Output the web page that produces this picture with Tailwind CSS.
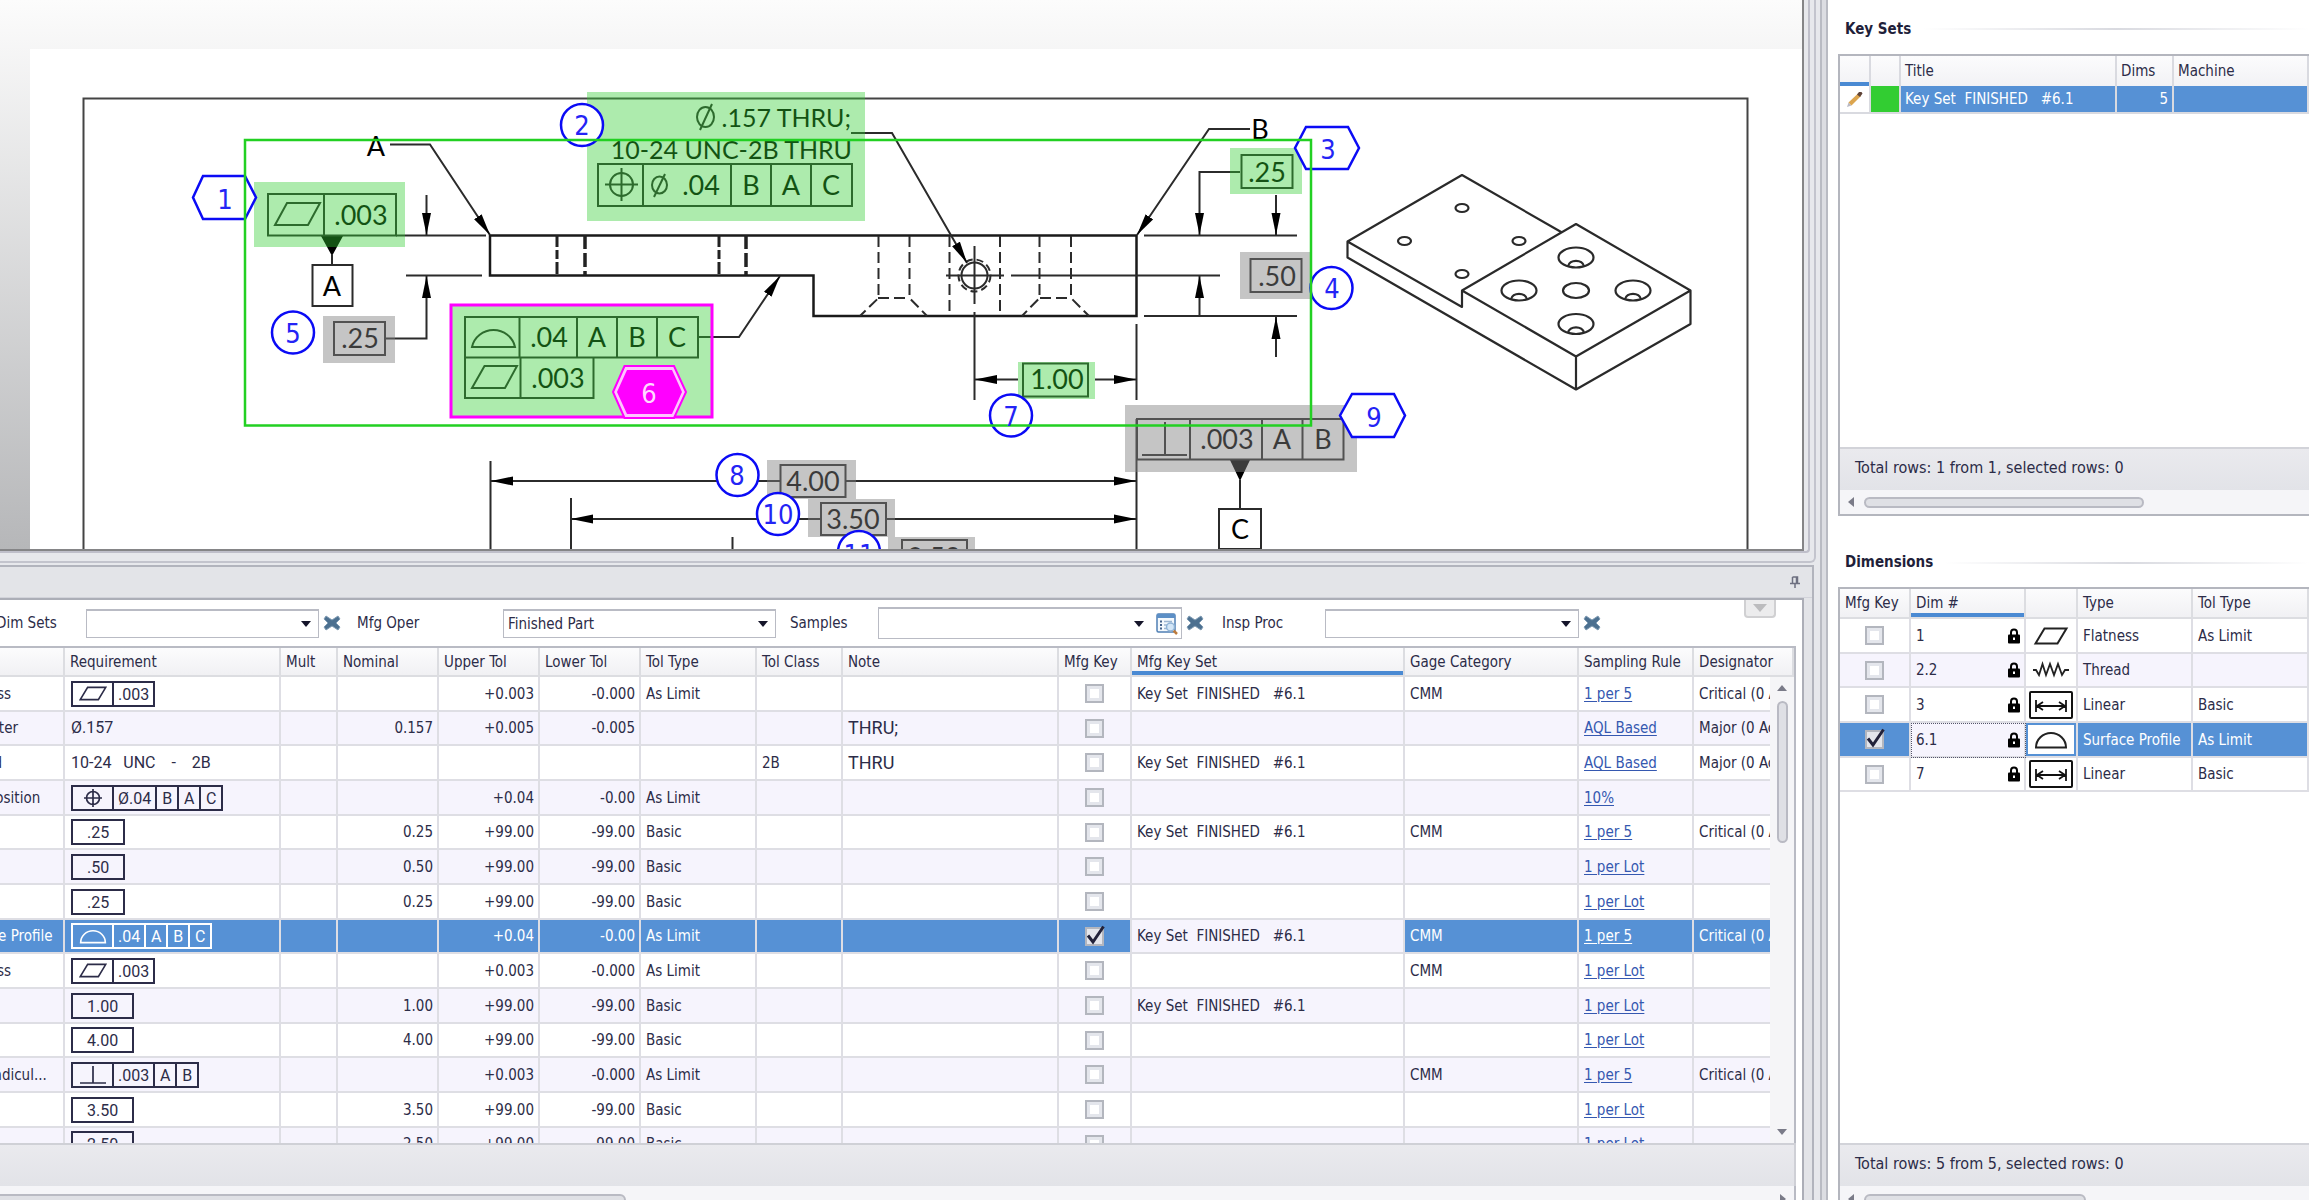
<!DOCTYPE html>
<html lang="en">
<head>
    <meta charset="UTF-8">
    <meta name="viewport" content="width=device-width, initial-scale=1.0">
    <title>Inspection Plan - Key Sets</title>
    <script src="https://cdn.jsdelivr.net/npm/@tailwindcss/browser@4"></script>
</head>
<body class="flex h-screen overflow-hidden bg-[#e7e8ec] font-['DejaVu_Sans_Condensed','DejaVu_Sans',sans-serif] text-[15px] leading-5 text-[#2c2c48]">

    <!-- Shared symbols -->
    <svg class="hidden" aria-hidden="true">
        <defs>
            <symbol id="clear" viewBox="0 0 18 16">
                <path d="M3 1L9 5L15 1L17 4L13 8L17 12L15 15L9 11L3 15L1 12L5 8L1 4Z" fill="#4c7090" stroke="#7f9bb3" stroke-width="1" stroke-linejoin="round"/>
            </symbol>
            <symbol id="flatness" viewBox="0 0 34 18">
                <path d="M1.5 16.5L10.5 1.5H32.5L23.5 16.5Z" fill="none" stroke="currentColor" stroke-width="2"/>
            </symbol>
            <symbol id="profile" viewBox="0 0 34 18">
                <path d="M2 16.500A15 14.500 0 0 1 32 16.500Z" fill="none" stroke="currentColor" stroke-width="2"/>
            </symbol>
            <symbol id="position" viewBox="0 0 34 18">
                <path d="M8 9H26M17 0V18M10.500 9a6.500 6.500 0 1 0 13 0a6.500 6.500 0 1 0 -13 0" fill="none" stroke="currentColor" stroke-width="1.700"/>
            </symbol>
            <symbol id="perpendicular" viewBox="0 0 34 18">
                <path d="M4 17H30M17 0V17" fill="none" stroke="currentColor" stroke-width="1.700"/>
            </symbol>
            <symbol id="thread" viewBox="0 0 38 18">
                <path d="M1 9H4L7 14L10.500 3L14 14L18 3L22 14L26 3L30 14L33 9H37" fill="none" stroke="#222" stroke-width="1.800"/>
            </symbol>
            <symbol id="linear" viewBox="0 0 44 28">
                <rect x="1" y="1" width="42" height="26" rx="1" fill="#fff" stroke="#111" stroke-width="2"/>
                <path d="M7 9V21M37 9V21M8 15H36M14 11L8 15L14 19M30 11L36 15L30 19" fill="none" stroke="#111" stroke-width="1.800"/>
            </symbol>
            <symbol id="lock" viewBox="0 0 12 16">
                <path d="M3 7V4.500a3 3 0 0 1 6 0V7" fill="none" stroke="#000" stroke-width="2"/>
                <rect x="0" y="6.500" width="12" height="9" rx="1" fill="#000"/>
                <path d="M6 9.500V12" stroke="#fff" stroke-width="2"/>
            </symbol>
        </defs>
    </svg>

    <!-- Drawing and characteristics -->
    <main class="flex min-w-0 flex-1 flex-col">
        <div class="mr-1 h-[563px] shrink-0 rounded-br-md border-r-2 border-b-2 border-[#c3c4cd]">
            <div class="mr-1 h-[553px] rounded-br border-r-2 border-b-2 border-[#bfbfca] pr-1">
                <section class="h-[551px] overflow-hidden border-r-2 border-b-2 border-[#858587] bg-linear-to-b from-[#fcfcfc] to-[#b6b7b9]" aria-label="Part drawing">
                    <svg viewBox="0 0 1802 549" preserveAspectRatio="xMinYMin slice" class="block h-full w-full font-[Lato,sans-serif] text-[27px]" fill="none" stroke="#2b2b2b" stroke-width="2">
                        <defs>
                            <marker id="arrow" markerUnits="userSpaceOnUse" markerWidth="23" markerHeight="10" refX="22" refY="5" orient="auto-start-reverse">
                                <path d="M0 0.500L22 5L0 9.500Z" fill="#000" stroke="none"/>
                            </marker>
                        </defs>
                        <rect x="30" y="49" width="1780" height="510" fill="#fff" stroke="none"/>
                        <path d="M83.500 560V98.500H1747.500V560" stroke="#444"/>

                        <!-- Side view -->
                        <path d="M490 235.500H1136.500V316H813.500V275.500H490Z" stroke="#1a1a1a" stroke-width="2.500"/>
                        <path d="M557 235V275M719 235V275" stroke="#222" stroke-width="3" stroke-dasharray="12 3 9 3"/>
                        <path d="M585 235V275M746 235V275" stroke="#222" stroke-width="3.500" stroke-dasharray="14 4"/>
                        <g stroke-dasharray="11 5">
                            <path d="M878.500 236V298L860 316M909.500 236V298L927 316M878 298H910"/>
                            <path d="M949.500 236V316M1000 236V316"/>
                            <path d="M1039.500 236V298L1022 316M1071 236V298L1089 316M1040 298H1071"/>
                        </g>
                        <circle cx="974.500" cy="275.500" r="13"/>
                        <circle cx="974.500" cy="275.500" r="16" stroke-dasharray="7 4"/>
                        <path d="M974.500 246V304M974.500 312V400M946 275.500H1004M1011 275.500H1220"/>
                        <path d="M396 235.500H486M406 275.500H482M1144 235.500H1297M1144 316H1297M1136.500 324V400M1136.500 419V560M490.500 461V560M571 498V560M732.500 537V560"/>

                        <!-- Leaders -->
                        <g marker-end="url(#arrow)">
                            <path d="M390 144.500H430L490 235"/>
                            <path d="M851 133H892L967 263"/>
                            <path d="M1250 129H1209L1137 235"/>
                            <path d="M698 337H739L780 276"/>
                            <path d="M426.500 195V235"/>
                            <path d="M386 338.500H426.500V276"/>
                            <path d="M1240 172H1199.500V235"/>
                            <path d="M1276 195V235"/>
                            <path d="M1199.500 316V276"/>
                            <path d="M1276 357V317"/>
                            <path d="M1018 379.500H975"/>
                            <path d="M1095 379.500H1136"/>
                        </g>
                        <path d="M491 481H1136" marker-start="url(#arrow)" marker-end="url(#arrow)"/>
                        <path d="M571 519H1136" marker-start="url(#arrow)" marker-end="url(#arrow)"/>

                        <!-- Datums -->
                        <path d="M321 236H343L332 256ZM1230 460H1250L1240 481Z" fill="#000" stroke="none"/>
                        <path d="M332 255V265M1240 480V509"/>
                        <rect x="312.500" y="265" width="40" height="41"/>
                        <rect x="1219" y="509" width="42" height="40"/>

                        <!-- Feature control frames -->
                        <path d="M268 194H396V235.500H268ZM324 194V235M275 225L287 203H320L308 225Z"/>
                        <path d="M598 164H852V206H598ZM643 164V206M731 164V206M771 164V206M811 164V206M605 184.500H638M621.500 168V201"/>
                        <circle cx="621.500" cy="184.500" r="11.500"/>
                        <ellipse cx="705.500" cy="117" rx="8.500" ry="10"/>
                        <path d="M700 130L712 104"/>
                        <ellipse cx="659.500" cy="185" rx="7.500" ry="8.500"/>
                        <path d="M654 197L665 174"/>
                        <path d="M465 317H698V357.500H465ZM519.500 317V357M577 317V357M617 317V357M657 317V357M465 357.500H593.500V398H465ZM520.500 357V398"/>
                        <path d="M472 347A22 21.500 0 0 1 515 347ZM472 388L484.500 366H517L505 388Z"/>
                        <path d="M1137 419H1343.500V459.500H1137ZM1190 419V459M1262 419V459M1302.500 419V459M1165 422V455M1142 455H1187"/>
                        <g fill="#fff">
                            <rect x="334" y="322" width="51" height="33"/>
                            <rect x="1241.500" y="155" width="51" height="33"/>
                            <rect x="1250.500" y="259" width="51" height="33"/>
                            <rect x="1023" y="363.500" width="65" height="33"/>
                            <rect x="780.500" y="465" width="65" height="32"/>
                            <rect x="821" y="503" width="65" height="32"/>
                            <rect x="902" y="540" width="65" height="32"/>
                        </g>

                        <!-- Drawing text -->
                        <g fill="#000" stroke="none" text-anchor="middle">
                            <text x="376" y="156">A</text>
                            <text x="361" y="225">.003</text>
                            <text x="332" y="296">A</text>
                            <text x="360" y="348">.25</text>
                            <text x="851" y="127" text-anchor="end" class="text-[25px]">.157 THRU;</text>
                            <text x="852" y="159" text-anchor="end" class="text-[25px]">10-24 UNC-2B THRU</text>
                            <text x="701" y="195">.04</text>
                            <text x="751" y="195">B</text>
                            <text x="791" y="195">A</text>
                            <text x="831" y="195">C</text>
                            <text x="549" y="347">.04</text>
                            <text x="597" y="347">A</text>
                            <text x="637" y="347">B</text>
                            <text x="677" y="347">C</text>
                            <text x="558" y="388">.003</text>
                            <text x="1260" y="139">B</text>
                            <text x="1267" y="182">.25</text>
                            <text x="1277" y="286">.50</text>
                            <text x="1057" y="389">1.00</text>
                            <text x="1227" y="449">.003</text>
                            <text x="1282" y="449">A</text>
                            <text x="1323" y="449">B</text>
                            <text x="1240" y="539">C</text>
                            <text x="813" y="491">4.00</text>
                            <text x="853" y="529">3.50</text>
                            <text x="934" y="567">2.50</text>
                        </g>

                        <!-- Captured areas -->
                        <g fill="#32cd32" fill-opacity="0.4" stroke="none">
                            <rect x="254" y="182" width="151" height="65"/>
                            <rect x="587" y="92" width="278" height="129"/>
                            <rect x="1230" y="148" width="72" height="46"/>
                            <rect x="1018" y="362" width="77" height="37"/>
                            <rect x="451" y="305" width="261" height="112"/>
                        </g>
                        <g fill="#808080" fill-opacity="0.46" stroke="none">
                            <rect x="323" y="316" width="72" height="47"/>
                            <rect x="1240" y="252" width="70" height="47"/>
                            <rect x="1125" y="405" width="232" height="67"/>
                            <rect x="767" y="460" width="89" height="39"/>
                            <rect x="808" y="499" width="87" height="38"/>
                            <rect x="888" y="537" width="87" height="38"/>
                        </g>
                        <rect x="451" y="305" width="261" height="112" stroke="#f0f" stroke-width="3"/>

                        <!-- Balloons -->
                        <g fill="#fff" stroke="#0b0bf5" stroke-width="2.500">
                            <path d="M193 197.500L203 176H245L256 197.500L245 219H203Z"/>
                            <circle cx="582" cy="125" r="21"/>
                            <path d="M1295 148L1306 127H1348L1359 148L1348 169H1306Z"/>
                            <circle cx="1331.500" cy="288" r="21"/>
                            <circle cx="293" cy="332.500" r="21"/>
                            <circle cx="1011" cy="415.500" r="21"/>
                            <circle cx="737.500" cy="475" r="21"/>
                            <path d="M1340 415.500L1352 394H1394L1405 415.500L1394 437H1352Z"/>
                            <circle cx="778" cy="514" r="21"/>
                            <circle cx="859" cy="552" r="21"/>
                        </g>
                        <rect x="245" y="140" width="1066" height="285.500" stroke="#22d022" stroke-width="2.500"/>
                        <path d="M613 392L624.500 366H674L686 392L674 418H624.500Z" fill="#ffc4ff" stroke="#f0f" stroke-width="2"/>
                        <path d="M617 392L627 370H672L682 392L672 414H627Z" fill="#f0f" stroke="none"/>
                        <g fill="#2424f5" stroke="none" text-anchor="middle" class="font-['DejaVu_Sans_Condensed','DejaVu_Sans',sans-serif]">
                            <text x="225" y="209">1</text>
                            <text x="582" y="135">2</text>
                            <text x="1328" y="159">3</text>
                            <text x="1332" y="298">4</text>
                            <text x="293" y="343">5</text>
                            <text x="649" y="403" fill="#ffd9ff">6</text>
                            <text x="1011" y="426">7</text>
                            <text x="737" y="485">8</text>
                            <text x="1374" y="427">9</text>
                            <text x="778" y="524">10</text>
                            <text x="859" y="564">11</text>
                        </g>

                        <!-- Isometric view -->
                        <g stroke="#2a2a2a" stroke-width="2.200" stroke-linejoin="round">
                            <path d="M1562 232.500L1462 175L1347.500 241.500V257.500L1576 389.500L1690.500 324V290.500L1576 224L1462 290.500V307L1347.500 241.500M1462 290.500L1576 356.500L1690.500 290.500M1576 356.500V389.500"/>
                            <ellipse cx="1462" cy="208" rx="6.500" ry="4"/>
                            <ellipse cx="1404.500" cy="241" rx="6.500" ry="4"/>
                            <ellipse cx="1519" cy="241" rx="6.500" ry="4"/>
                            <ellipse cx="1462" cy="274" rx="6.500" ry="4"/>
                            <ellipse cx="1576" cy="257.500" rx="17.500" ry="10"/>
                            <path d="M1568 266.500C1569 259 1583 259 1584 266.500"/>
                            <ellipse cx="1519" cy="290.500" rx="17.500" ry="10"/>
                            <path d="M1511 299.500C1512 292 1526 292 1527 299.500"/>
                            <ellipse cx="1633" cy="290.500" rx="17.500" ry="10"/>
                            <path d="M1625 299.500C1626 292 1640 292 1641 299.500"/>
                            <ellipse cx="1576" cy="324" rx="17.500" ry="10"/>
                            <path d="M1568 333C1569 325.500 1583 325.500 1584 333"/>
                            <ellipse cx="1576" cy="290.500" rx="13" ry="7.500"/>
                        </g>
                    </svg>
                </section>
            </div>
        </div>

        <div class="mt-0.5 mr-1.5 flex min-h-0 flex-1 flex-col border-t-2 border-r-2 border-[#b2b4bd] bg-[#e3e4e8]">
            <div class="flex h-[31px] shrink-0 items-center justify-end border-b border-[#d2d3da] pr-3">
                <button type="button" aria-label="Pin panel">
                    <svg class="h-3 w-2.5" viewBox="0 0 10 12" fill="none" stroke="#6d6f80" stroke-width="1.500"><path d="M2.500 1H7.500V7M2.500 1V7M0 7.500H10M5 7.500V12M6.500 1V7"/></svg>
                </button>
            </div>
            <div class="mr-2 flex min-h-0 flex-1 flex-col border-t-2 border-r-2 border-[#acaeb7] bg-white pr-1.5">
                <!-- Filters -->
                <form class="relative flex h-[46px] shrink-0 items-center">
                    <label for="dimSets" class="-ml-1 w-[90px] shrink-0 whitespace-nowrap">Dim Sets</label>
                    <div class="relative w-[233px]">
                        <select id="dimSets" class="block h-[29px] w-full appearance-none border border-t-2 border-[#b9bbc4] bg-white pl-1"><option></option></select>
                        <svg class="pointer-events-none absolute top-3 right-2 h-1.5 w-2.5" viewBox="0 0 10 6"><path d="M0 0H10L5 6Z" fill="#15152a"/></svg>
                    </div>
                    <button type="button" class="ml-1 w-[18px]" aria-label="Clear dim sets"><svg class="h-4 w-[18px]"><use href="#clear"/></svg></button>
                    <label for="mfgOper" class="ml-4 w-[146px] shrink-0">Mfg Oper</label>
                    <div class="relative w-[273px]">
                        <select id="mfgOper" class="block h-[29px] w-full appearance-none border border-t-2 border-[#b9bbc4] bg-white pl-1"><option>Finished Part</option></select>
                        <svg class="pointer-events-none absolute top-3 right-2 h-1.5 w-2.5" viewBox="0 0 10 6"><path d="M0 0H10L5 6Z" fill="#15152a"/></svg>
                    </div>
                    <label for="samples" class="ml-3.5 w-[88px] shrink-0">Samples</label>
                    <div class="relative w-[304px]">
                        <select id="samples" class="block h-8 w-full appearance-none border border-t-2 border-[#b9bbc4] bg-white pl-1"><option></option></select>
                        <svg class="pointer-events-none absolute top-3.5 right-[38px] h-1.5 w-2.5" viewBox="0 0 10 6"><path d="M0 0H10L5 6Z" fill="#15152a"/></svg>
                        <button type="button" class="absolute top-1.5 right-1 h-[22px] w-[22px]" aria-label="Browse samples">
                            <svg viewBox="0 0 22 22" fill="none">
                                <rect x="1" y="1" width="18" height="18" rx="1.500" fill="#f4f9fd" stroke="#4f7fb4" stroke-width="1.500"/>
                                <path d="M1 1H19V5H1Z" fill="#5c8fc6"/>
                                <path d="M4 8.500H6M4 12H6M4 15.500H6" stroke="#47648c" stroke-width="2"/>
                                <path d="M8 8.500H16M8 12H11M8 15.500H11" stroke="#9db6d2" stroke-width="1.500"/>
                                <path d="M17.500 17.500L21 21" stroke="#bd7b3c" stroke-width="2.500"/>
                                <circle cx="14.500" cy="14" r="4" fill="#d3e6f7" stroke="#8fb3d6" stroke-width="1.500"/>
                            </svg>
                        </button>
                    </div>
                    <button type="button" class="ml-1 w-[18px]" aria-label="Clear samples"><svg class="h-4 w-[18px]"><use href="#clear"/></svg></button>
                    <label for="inspProc" class="ml-[18px] w-[103px] shrink-0">Insp Proc</label>
                    <div class="relative w-[254px]">
                        <select id="inspProc" class="block h-[29px] w-full appearance-none border border-t-2 border-[#b9bbc4] bg-white pl-1"><option></option></select>
                        <svg class="pointer-events-none absolute top-3 right-2 h-1.5 w-2.5" viewBox="0 0 10 6"><path d="M0 0H10L5 6Z" fill="#15152a"/></svg>
                    </div>
                    <button type="button" class="ml-1 w-[18px]" aria-label="Clear insp proc"><svg class="h-4 w-[18px]"><use href="#clear"/></svg></button>
                    <button type="button" class="absolute top-0 right-5 flex h-[18px] w-8 items-center justify-center rounded-b border-2 border-t-0 border-[#d0d0d2] bg-[#ececed]" aria-label="Collapse filters">
                        <svg class="h-2 w-3.5" viewBox="0 0 14 8"><path d="M0 0H14L7 8Z" fill="#bcbcbe"/></svg>
                    </button>
                </form>

                <!-- Characteristics grid -->
                <div class="relative min-h-0 flex-1 overflow-hidden border-t-2 border-r-2 border-[#b9bbc4]">
                    <table class="w-full table-fixed border-separate border-spacing-0">
                        <colgroup>
                            <col class="w-[65px]"><col class="w-[216px]"><col class="w-[57px]"><col class="w-[101px]"><col class="w-[101px]"><col class="w-[101px]"><col class="w-[116px]"><col class="w-[86px]"><col><col class="w-[73px]"><col class="w-[273px]"><col class="w-[174px]"><col class="w-[115px]"><col class="w-[100px]">
                        </colgroup>
                        <thead>
                            <tr class="h-[29px] bg-linear-to-b from-[#fcfcfd] to-[#f0f0f3] text-left whitespace-nowrap [&>th]:border-r-2 [&>th]:border-b-2 [&>th]:border-[#dcdde1] [&>th]:p-0 [&>th]:pl-[5px] [&>th]:font-normal">
                                <th></th>
                                <th>Requirement</th>
                                <th>Mult</th>
                                <th>Nominal</th>
                                <th>Upper Tol</th>
                                <th>Lower Tol</th>
                                <th>Tol Type</th>
                                <th>Tol Class</th>
                                <th>Note</th>
                                <th>Mfg Key</th>
                                <th class="shadow-[inset_0_-4px_0_#4a8ad3]">Mfg Key Set</th>
                                <th>Gage Category</th>
                                <th>Sampling Rule</th>
                                <th>Designator</th>
                            </tr>
                        </thead>
                        <tbody id="characteristics" class="whitespace-nowrap [&>tr]:h-[35px] [&>tr:nth-child(3n+2)]:h-[34px]"></tbody>
                    </table>
                    <div class="absolute top-[29px] right-0 bottom-0 flex w-6 flex-col items-center bg-[#f5f5f7] py-2">
                        <svg class="h-1.5 w-2.5" viewBox="0 0 10 6"><path d="M0 6H10L5 0Z" fill="#7a7b88"/></svg>
                        <div class="mt-2.5 h-[142px] w-[11px] rounded-full border-2 border-[#b9bac3] bg-[#dfe0e5]"></div>
                        <svg class="mt-auto h-1.5 w-2.5" viewBox="0 0 10 6"><path d="M0 0H10L5 6Z" fill="#7a7b88"/></svg>
                    </div>
                </div>
                <div class="h-[43px] shrink-0 border-t-2 border-r-2 border-[#cfd0d6] bg-linear-to-b from-[#eaeaee] to-[#e2e3e8]"></div>
                <div class="flex h-3.5 shrink-0 items-start overflow-hidden border-r-2 border-[#b9bbc4] bg-[#f5f5f8] pt-2">
                    <div class="-ml-2 h-3 w-[634px] rounded-full border-2 border-[#b9bac3] bg-[#dfe0e5]"></div>
                    <svg class="mr-2 ml-auto h-2.5 w-1.5" viewBox="0 0 6 10"><path d="M0 0V10L6 5Z" fill="#7a7b88"/></svg>
                </div>
            </div>
        </div>
    </main>

    <div class="w-2 shrink-0 border-x-2 border-[#b9bbc3] bg-[#dcdde2]"></div>

    <!-- Key sets and their dimensions -->
    <aside class="flex w-[481px] shrink-0 flex-col overflow-hidden bg-white pl-2.5">
        <div class="flex h-[54px] shrink-0 items-center gap-3 pt-1 pl-[7px]">
            <h2 class="font-bold text-[#1f1f3a]">Key Sets</h2>
            <div class="h-0.5 flex-1 bg-linear-to-r from-white via-[#d9dae0] to-white"></div>
        </div>
        <section class="flex h-[462px] shrink-0 flex-col border-y-2 border-l-2 border-[#b4b6be]">
            <table class="w-full table-fixed border-separate border-spacing-0 whitespace-nowrap">
                <colgroup><col class="w-[31px]"><col class="w-[30px]"><col class="w-[216px]"><col class="w-[57px]"><col></colgroup>
                <thead>
                    <tr class="h-[30px] bg-linear-to-b from-[#fcfcfd] to-[#f2f2f5] text-left [&>th]:border-r-2 [&>th]:border-[#d9dae0] [&>th]:p-0 [&>th]:pl-1 [&>th]:font-normal">
                        <th class="shadow-[inset_0_-4px_0_#4a8ad3]"></th>
                        <th></th>
                        <th>Title</th>
                        <th>Dims</th>
                        <th>Machine</th>
                    </tr>
                </thead>
                <tbody>
                    <tr class="h-7 bg-[#5691d5] text-white [&>td]:border-r-2 [&>td]:border-b-2 [&>td]:border-[#d9dae0] [&>td]:p-0">
                        <td class="bg-white">
                            <svg class="mx-auto h-[17px] w-[17px]" viewBox="0 0 17 17"><path d="M1 16L2.500 11.500L5.500 14.500Z" fill="#b9b9c4"/><path d="M2.500 11.500L12 2.500L15 5L5.500 14.500Z" fill="#dca54e"/><path d="M11 3.500L13 1H15.500L16.500 2.500L14 6Z" fill="#5f4438"/></svg>
                        </td>
                        <td class="bg-[#32cd32]"></td>
                        <td class="pl-1!"><span class="whitespace-pre">Key Set  FINISHED   #6.1</span></td>
                        <td class="pr-1! text-right">5</td>
                        <td></td>
                    </tr>
                </tbody>
            </table>
            <p class="mt-auto h-[43px] border-t-2 border-[#d2d3d9] bg-linear-to-b from-[#eaeaee] to-[#e2e3e8] pt-[9px] pl-[15px] text-[16px]">Total rows: 1 from 1, selected rows: 0</p>
            <div class="flex h-6 items-center gap-2.5 bg-[#f5f5f8] pl-2">
                <svg class="h-2.5 w-1.5" viewBox="0 0 6 10"><path d="M6 0V10L0 5Z" fill="#7a7b88"/></svg>
                <div class="h-[11px] w-[280px] rounded-full border-2 border-[#b9bac3] bg-[#dfe0e5]"></div>
            </div>
        </section>
        <div class="flex h-[71px] shrink-0 items-end gap-3 pb-[15px] pl-[7px]">
            <h2 class="font-bold text-[#1f1f3a]">Dimensions</h2>
            <div class="mb-2 h-0.5 flex-1 bg-linear-to-r from-white via-[#d9dae0] to-white"></div>
        </div>
        <section class="flex min-h-0 flex-1 flex-col border-t-2 border-l-2 border-[#b4b6be]">
            <table class="w-full table-fixed border-separate border-spacing-0 whitespace-nowrap">
                <colgroup><col class="w-[71px]"><col class="w-[115px]"><col class="w-[52px]"><col class="w-[115px]"><col></colgroup>
                <thead>
                    <tr class="h-[30px] bg-linear-to-b from-[#fcfcfd] to-[#f0f0f3] text-left [&>th]:border-r-2 [&>th]:border-b-2 [&>th]:border-[#dcdde1] [&>th]:p-0 [&>th]:pl-[5px] [&>th]:font-normal">
                        <th>Mfg Key</th>
                        <th class="shadow-[inset_0_-4px_0_#4a8ad3]">Dim #</th>
                        <th></th>
                        <th>Type</th>
                        <th>Tol Type</th>
                    </tr>
                </thead>
                <tbody id="dimensions" class="[&>tr]:h-[35px] [&>tr:nth-child(3n+2)]:h-[34px]"></tbody>
            </table>
            <p class="mt-auto h-[43px] shrink-0 border-t-2 border-[#d2d3d9] bg-linear-to-b from-[#eaeaee] to-[#e2e3e8] pt-[9px] pl-[15px] text-[16px]">Total rows: 5 from 5, selected rows: 0</p>
            <div class="flex h-3.5 shrink-0 items-start gap-2.5 overflow-hidden bg-[#f5f5f8] pt-2 pl-2">
                <svg class="h-2.5 w-1.5 shrink-0" viewBox="0 0 6 10"><path d="M6 0V10L0 5Z" fill="#7a7b88"/></svg>
                <div class="h-3 w-[222px] rounded-full border-2 border-[#b9bac3] bg-[#dfe0e5]"></div>
            </div>
        </section>
    </aside>

    <script>
        const KEY_SET = 'Key Set  FINISHED   #6.1';

        // frame: cells of a feature control frame, basic: boxed value, text: plain requirement
        const characteristics = [
            { type: 'Flatness', frame: ['#flatness', '.003'], upper: '+0.003', lower: '-0.000', tol: 'As Limit', set: KEY_SET, gage: 'CMM', rule: '1 per 5', des: 'Critical (0 Ac)' },
            { type: 'Diameter', text: 'Ø.157', nominal: '0.157', upper: '+0.005', lower: '-0.005', note: 'THRU;', rule: 'AQL Based', des: 'Major (0 Ac)' },
            { type: 'Thread', text: '10-24   UNC    -    2B', cls: '2B', note: 'THRU', set: KEY_SET, rule: 'AQL Based', des: 'Major (0 Ac)' },
            { type: 'True Position', frame: ['#position', 'Ø.04', 'B', 'A', 'C'], upper: '+0.04', lower: '-0.00', tol: 'As Limit', rule: '10%' },
            { basic: '.25', nominal: '0.25', upper: '+99.00', lower: '-99.00', tol: 'Basic', set: KEY_SET, gage: 'CMM', rule: '1 per 5', des: 'Critical (0 Ac)' },
            { basic: '.50', nominal: '0.50', upper: '+99.00', lower: '-99.00', tol: 'Basic', rule: '1 per Lot' },
            { basic: '.25', nominal: '0.25', upper: '+99.00', lower: '-99.00', tol: 'Basic', rule: '1 per Lot' },
            { type: 'Surface Profile', frame: ['#profile', '.04', 'A', 'B', 'C'], upper: '+0.04', lower: '-0.00', tol: 'As Limit', set: KEY_SET, gage: 'CMM', rule: '1 per 5', des: 'Critical (0 Ac)', selected: true },
            { type: 'Flatness', frame: ['#flatness', '.003'], upper: '+0.003', lower: '-0.000', tol: 'As Limit', gage: 'CMM', rule: '1 per Lot' },
            { basic: '1.00', nominal: '1.00', upper: '+99.00', lower: '-99.00', tol: 'Basic', set: KEY_SET, rule: '1 per Lot' },
            { basic: '4.00', nominal: '4.00', upper: '+99.00', lower: '-99.00', tol: 'Basic', rule: '1 per Lot' },
            { type: 'Perpendicul...', frame: ['#perpendicular', '.003', 'A', 'B'], upper: '+0.003', lower: '-0.000', tol: 'As Limit', gage: 'CMM', rule: '1 per 5', des: 'Critical (0 Ac)' },
            { basic: '3.50', nominal: '3.50', upper: '+99.00', lower: '-99.00', tol: 'Basic', rule: '1 per Lot' },
            { basic: '2.50', nominal: '2.50', upper: '+99.00', lower: '-99.00', tol: 'Basic', rule: '1 per Lot' },
        ];

        const dimensions = [
            { num: '1', icon: '#flatness', type: 'Flatness', tol: 'As Limit' },
            { num: '2.2', icon: '#thread', type: 'Thread', tol: '' },
            { num: '3', icon: '#linear', type: 'Linear', tol: 'Basic' },
            { num: '6.1', icon: '#profile', type: 'Surface Profile', tol: 'As Limit', selected: true },
            { num: '7', icon: '#linear', type: 'Linear', tol: 'Basic' },
        ];

        const ICON_SIZES = {
            '#flatness': 'h-[15px] w-7',
            '#profile': 'h-[15px] w-7',
            '#position': 'h-[18px] w-[34px]',
            '#perpendicular': 'h-[18px] w-[34px]',
        };

        function rowColors(row) {
            return row.selected ? 'bg-[#5691d5] text-white' : 'even:bg-[#f6f4fd]';
        }

        function checkbox(checked, label) {
            return `
                <span class="relative mx-auto block h-[19px] w-[19px]">
                    <input type="checkbox" aria-label="${label}" ${checked ? 'checked' : ''} class="peer block h-full w-full appearance-none border-2 border-[#b3b6be] bg-white shadow-[inset_0_0_0_3px_#e4e6ec] checked:bg-[#e4e6ec]">
                    <svg class="pointer-events-none absolute -top-0.5 left-0 hidden h-5 w-5 peer-checked:block" viewBox="0 0 20 20" fill="none" stroke="#22223a" stroke-width="3"><path d="M3 10.500L8 17L18.500 1.500"/></svg>
                </span>
            `;
        }

        function frameCell(cell) {
            if (cell[0] === '#') {
                return `<span class="flex w-[41px] items-center justify-center border-r-2 border-current"><svg class="${ICON_SIZES[cell]}"><use href="${cell}"/></svg></span>`;
            }
            return `<span class="min-w-[22px] border-r-2 border-current px-1 text-center">${cell}</span>`;
        }

        function requirement(row) {
            if (row.frame) {
                return `<span class="ml-1.5 inline-flex h-[26px] border-2 border-r-0 border-current align-middle leading-[23px]">${row.frame.map(frameCell).join('')}</span>`;
            }
            if (row.basic) {
                return `<span class="ml-1.5 inline-block h-[26px] border-2 border-current px-3.5 align-middle leading-[23px]">${row.basic}</span>`;
            }
            return `<span class="ml-1.5 whitespace-pre">${row.text}</span>`;
        }

        document.getElementById('characteristics').innerHTML = characteristics.map((row) => `
            <tr class="${rowColors(row)} [&>td]:overflow-hidden [&>td]:border-r-2 [&>td]:border-b-2 [&>td]:border-[#dedee4] [&>td]:p-0">
                <td><span class="-ml-[45px]">${row.type || ''}</span></td>
                <td class="font-[Roboto,sans-serif] text-[16px]">${requirement(row)}</td>
                <td></td>
                <td class="pr-1! text-right">${row.nominal || ''}</td>
                <td class="pr-1! text-right">${row.upper || ''}</td>
                <td class="pr-1! text-right">${row.lower || ''}</td>
                <td class="pl-[5px]!">${row.tol || ''}</td>
                <td class="pl-[5px]!">${row.cls || ''}</td>
                <td class="pl-[5px]! font-[Roboto,sans-serif] text-[18px]">${row.note || ''}</td>
                <td>${checkbox(row.selected, 'Mfg key')}</td>
                <td class="pl-[5px]! ${row.selected ? 'bg-[#f6f4fd] text-[#2c2c48]' : ''}"><span class="whitespace-pre">${row.set || ''}</span></td>
                <td class="pl-[5px]!">${row.gage || ''}</td>
                <td class="pl-[5px]!"><a href="#" class="underline underline-offset-2 ${row.selected ? 'text-white' : 'text-[#3558b0]'}">${row.rule}</a></td>
                <td class="pl-[5px]!">${row.des || ''}</td>
            </tr>
        `).join('');

        document.getElementById('dimensions').innerHTML = dimensions.map((row) => `
            <tr class="${rowColors(row)} [&>td]:border-r-2 [&>td]:border-b-2 [&>td]:border-[#dedee4] [&>td]:p-0">
                <td>${checkbox(row.selected, 'Mfg key for ' + row.num)}</td>
                <td class="${row.selected ? 'bg-[#f6f4fd] text-[#2c2c48] outline-1 -outline-offset-1 outline-dotted outline-[#55556a]' : ''}">
                    <span class="flex items-center justify-between pr-1 pl-[5px]">${row.num}<svg class="h-4 w-3"><use href="#lock"/></svg></span>
                </td>
                <td class="${row.selected ? 'shadow-[inset_0_0_0_2px_#5691d5]' : ''} bg-white text-[#222]">
                    <svg class="mx-auto ${row.icon === '#linear' ? 'h-7 w-11' : 'h-[18px] w-[38px]'}"><use href="${row.icon}"/></svg>
                </td>
                <td class="pl-[5px]!">${row.type}</td>
                <td class="pl-[5px]!">${row.tol}</td>
            </tr>
        `).join('');
    </script>
</body>
</html>
